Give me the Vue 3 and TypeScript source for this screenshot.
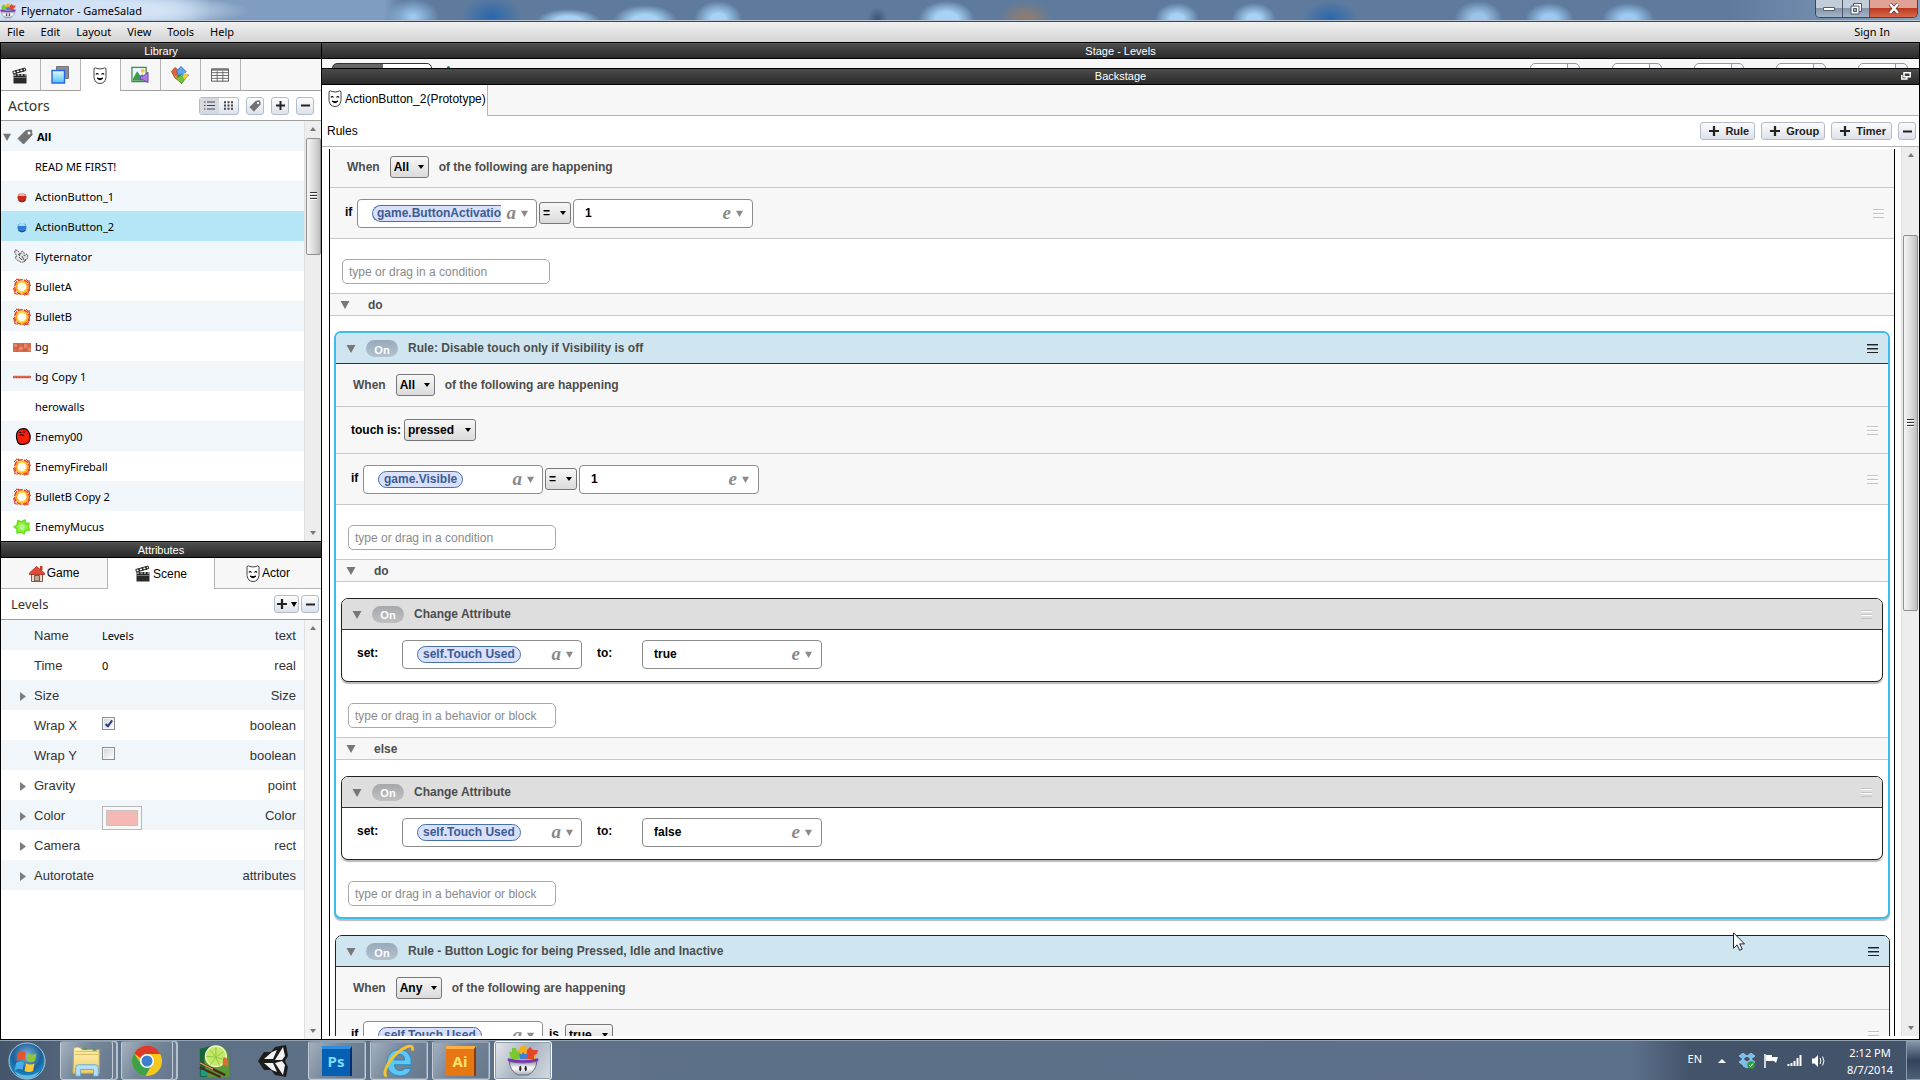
<script setup lang="ts">
import { ref } from 'vue'

interface Actor {
  name: string
  icon?: string
}

interface Attribute {
  name: string
  type: string
  value?: string
  checked?: boolean
  swatch?: boolean
  expandable?: boolean
}

interface Condition {
  kind: 'compare' | 'touch' | 'state'
  attribute?: string
  operator?: string
  value?: string
}

interface Change {
  attribute: string
  value: string
}

interface Section {
  label: string
  changes: Change[]
}

interface Rule {
  title: string
  mode: string
  selected: boolean
  conditions: Condition[]
  sections: Section[]
}

const menus = ['File', 'Edit', 'Layout', 'View', 'Tools', 'Help']

const libraryTabs = [
  { id: 'clapper', label: 'Scenes' },
  { id: 'layers', label: 'Layers' },
  { id: 'mask', label: 'Actors' },
  { id: 'media', label: 'Media' },
  { id: 'puzzle', label: 'Behaviors' },
  { id: 'table', label: 'Tables' },
]
const libraryTab = ref('mask')

const actors: Actor[] = [
  { name: 'READ ME FIRST!' },
  { name: 'ActionButton_1', icon: 'ball-red' },
  { name: 'ActionButton_2', icon: 'ball-blue' },
  { name: 'Flyternator', icon: 'bug' },
  { name: 'BulletA', icon: 'fire' },
  { name: 'BulletB', icon: 'fire' },
  { name: 'bg', icon: 'bricks' },
  { name: 'bg Copy 1', icon: 'strip' },
  { name: 'herowalls' },
  { name: 'Enemy00', icon: 'enemy' },
  { name: 'EnemyFireball', icon: 'fire' },
  { name: 'BulletB Copy 2', icon: 'fire' },
  { name: 'EnemyMucus', icon: 'mucus' },
]
const selectedActor = ref('ActionButton_2')

const attributeTabs = [
  { id: 'home', label: 'Game' },
  { id: 'clapper', label: 'Scene' },
  { id: 'mask', label: 'Actor' },
]
const attributeTab = ref('clapper')

const attributes: Attribute[] = [
  { name: 'Name', type: 'text', value: 'Levels' },
  { name: 'Time', type: 'real', value: '0' },
  { name: 'Size', type: 'Size', expandable: true },
  { name: 'Wrap X', type: 'boolean', checked: true },
  { name: 'Wrap Y', type: 'boolean', checked: false },
  { name: 'Gravity', type: 'point', expandable: true },
  { name: 'Color', type: 'Color', swatch: true, expandable: true },
  { name: 'Camera', type: 'rect', expandable: true },
  { name: 'Autorotate', type: 'attributes', expandable: true },
]

const addButtons = ['Rule', 'Group', 'Timer']

const rules: Rule[] = [
  {
    title: 'Rule: Disable touch only if Visibility is off',
    mode: 'All',
    selected: true,
    conditions: [
      { kind: 'touch', value: 'pressed' },
      { kind: 'compare', attribute: 'game.Visible', operator: '=', value: '1' },
    ],
    sections: [
      { label: 'do', changes: [{ attribute: 'self.Touch Used', value: 'true' }] },
      { label: 'else', changes: [{ attribute: 'self.Touch Used', value: 'false' }] },
    ],
  },
  {
    title: 'Rule - Button Logic for being Pressed, Idle and Inactive',
    mode: 'Any',
    selected: false,
    conditions: [{ kind: 'state', attribute: 'self.Touch Used', value: 'true' }],
    sections: [],
  },
]
</script>

<template>
  <div class="desktop">
    <svg class="defs" aria-hidden="true">
      <defs>
        <linearGradient id="sky" x1="0" y1="0" x2="0" y2="1">
          <stop offset="0" stop-color="#e4fbff" /><stop offset="1" stop-color="#4fc3f5" />
        </linearGradient>
        <radialGradient id="orb" cx=".5" cy=".35" r=".65">
          <stop offset="0" stop-color="#7fb6dc" /><stop offset=".6" stop-color="#1d5f97" /><stop offset=".85" stop-color="#1b84c4" /><stop offset="1" stop-color="#0c2f52" />
        </radialGradient>
        <linearGradient id="folder" x1="0" y1="0" x2="0" y2="1">
          <stop offset="0" stop-color="#fff3b8" /><stop offset="1" stop-color="#efcf69" />
        </linearGradient>
        <linearGradient id="bowl" x1="0" y1="0" x2="0" y2="1">
          <stop offset="0" stop-color="#8b8ba8" /><stop offset=".5" stop-color="#fff" /><stop offset="1" stop-color="#a9a9bd" />
        </linearGradient>
      </defs>

      <symbol id="clapper" viewBox="0 0 16 17">
        <path d="M1.500 7h13v9.500h-13z" fill="#2a2a2a" />
        <path d="M2 8h12.500" stroke="#fff" stroke-dasharray="2 1.500" />
        <path d="M2 10.500h12" stroke="#777" />
        <path d="M.8 4.500 13 1l.8 2.500L1.500 7z" fill="#fff" stroke="#222" />
        <path d="m3.500 3.800 1.500 2.400M7 2.800l1.500 2.400M10.500 2l1.500 2.200" stroke="#222" stroke-width="1.600" />
      </symbol>
      <symbol id="layers" viewBox="0 0 18 18">
        <path d="M5.500.5h12v12h-12z" fill="#8a8d95" stroke="#777" />
        <path d="M1 4.500h12.500V17H1z" fill="url(#sky)" stroke="#2a66e8" stroke-width="1.400" />
      </symbol>
      <symbol id="mask" viewBox="0 0 14 17">
        <path d="M1 1.500Q2.500.300 4 1.500q3 1 6 0 1.500-1.200 3 0v9q-1 6-6 6t-6-6z" fill="#fff" stroke="#444" />
        <path d="M3 7.500q1-2 2.500 0M8.500 7.500q1.500-2 2.500 0" fill="none" stroke="#000" stroke-width="1.200" />
        <path d="M4 11q3 3.500 6 0-3 1.500-6 0z" stroke="#000" />
      </symbol>
      <symbol id="media" viewBox="0 0 19 18">
        <path d="M1 1h15v15H1z" fill="#e8f6ff" stroke="#3f8a45" stroke-width="1.300" />
        <path d="M2 13 6.500 5 10 10l2-2 3 5v2H2z" fill="#3f9a4a" />
        <circle cx="12.500" cy="4.500" r="2" fill="#ffc629" />
        <path d="M10 10h3l5-4v11l-5-3h-3z" fill="#a77be0" stroke="#7347b5" />
      </symbol>
      <symbol id="puzzle" viewBox="0 0 18 18">
        <path d="M.5 5.500 4 1.500l4.500 4L9 9l1.500 8L4 12z" fill="#e0653a" stroke="#a53c1b" stroke-width=".8" />
        <path d="m10 .5 5 5-3 4-2-1.500L7.500 10l-2-5z" fill="#58a9ee" stroke="#2867b5" stroke-width=".8" />
        <path d="m9 9.500 3 1 2.500-2 3 .5-7 8.500-5-5z" fill="#63c83c" stroke="#2f8a20" stroke-width=".8" />
        <path d="m13.500 6.500 4 3-4 4-2-3z" fill="#f7cf3a" />
        <path d="m5 10 5 7-5-5-2-3z" fill="#f09b2d" />
      </symbol>
      <symbol id="table" viewBox="0 0 19 14">
        <path d="M.5.5h18v13H.5z" fill="#fff" stroke="#555" />
        <path d="M1 1.500h17" stroke="#777" stroke-width="2" />
        <path d="M0 4.500h19M0 7.500h19M0 10.500h19M6.500 3v11M12.500 3v11" stroke="#666" />
      </symbol>
      <symbol id="tag" viewBox="0 0 16 16">
        <path d="M9 1.500 14.500 1 15 6 6.500 15 1 9.500z" fill="#727272" stroke="#727272" stroke-linejoin="round" />
        <circle cx="12" cy="4" r="1.500" fill="#fff" />
      </symbol>
      <symbol id="list" viewBox="0 0 11 9">
        <path d="M0 1h1.500M0 4.500h1.500M0 8h1.500M3 1h8M3 4.500h8M3 8h8" stroke="#444" stroke-width="1.200" />
      </symbol>
      <symbol id="grid" viewBox="0 0 9 9">
        <path d="M0 1.200h9M0 4.500h9M0 7.800h9" stroke="#444" stroke-width="2" stroke-dasharray="2 1.500" />
      </symbol>
      <symbol id="plus" viewBox="0 0 9 9"><path d="M4.500 0v9M0 4.500h9" stroke="currentColor" stroke-width="2" /></symbol>
      <symbol id="minus" viewBox="0 0 9 9"><path d="M0 4.500h9" stroke="currentColor" stroke-width="2" /></symbol>
      <symbol id="down" viewBox="0 0 10 10"><path d="M0 1h10L5 10z" fill="currentColor" /></symbol>
      <symbol id="right" viewBox="0 0 6 9"><path d="M0 0v9l6-4.500z" fill="#7d7d7d" /></symbol>
      <symbol id="home" viewBox="0 0 16 17">
        <path d="M2.500 8v8.500h11V8z" fill="#ecdcc8" stroke="#7a5a4a" />
        <path d="M5.500 16V10.500h5V16z" fill="#b9a89a" stroke="#7a5a4a" />
        <path d="M11 1h2.500v4H11z" fill="#c13a2c" />
        <path d="M.5 8 7.500 1.500 15.500 8v1.500H.5z" fill="#dc4a38" stroke="#a5281b" stroke-width=".8" />
      </symbol>

      <symbol id="ball-red" viewBox="0 0 18 18">
        <circle cx="9" cy="9.500" r="4.500" fill="#c8281c" /><path d="M5 8q4-7 8 0z" fill="#f3b5ac" /><path d="M5.500 12.500q3.500 3 7 0" stroke="#5e1d18" fill="none" />
      </symbol>
      <symbol id="ball-blue" viewBox="0 0 18 18">
        <circle cx="9" cy="9.500" r="4.500" fill="#2b7fd6" /><path d="M5 8q4-7 8 0z" fill="#b4dcfa" /><path d="M5.500 12.500q3.500 3 7 0" stroke="#173e74" fill="none" />
      </symbol>
      <symbol id="bug" viewBox="0 0 18 18">
        <path d="M2 2q4 0 5 5l2-4q3 1 2 5l3-2q2 3-1 6-4 4-7 1-3-1-4-4l2-1q-3-3-2-6z" fill="#e3e3e3" stroke="#555" stroke-dasharray="2 .8" />
        <path d="m6 9 3 3M9 8l2 4M5 6l2 2M11 14l2-3" stroke="#555" />
      </symbol>
      <symbol id="fire" viewBox="0 0 18 18">
        <circle cx="9" cy="9" r="7.300" fill="none" stroke="#e8401c" stroke-width="1.600" stroke-dasharray="5 1" />
        <path d="M1 4q2-3 5-3M3 1l3 1M13 1l3 3 1.500 4M16 2l.5 4M.5 10l1 4 3 3M1 15l2 1M17 11l-2 4-4 2.500M16 16l-3 .5" stroke="#e8401c" fill="none" />
        <circle cx="9" cy="9" r="5.600" fill="#fffdf0" stroke="#ffa51f" stroke-width="2" />
        <path d="M5 5q4-3 8 1M4.500 11.500q4 5 8.500 0" stroke="#ffdc3c" stroke-width="1.500" fill="none" />
      </symbol>
      <symbol id="bricks" viewBox="0 0 18 18">
        <path d="M0 5h18v9H0z" fill="#dd6a4a" />
        <path d="M1 6h3v3H1zM6 9h4v3H6zM11 6h3v4h-3zM15 10h3v3h-3z" fill="#e08a6c" />
        <path d="M0 10h5M5 5v5M10 5v4M9 12h6M4 12v2" stroke="#c4563c" />
      </symbol>
      <symbol id="strip" viewBox="0 0 18 18">
        <path d="M0 9h18" stroke="#d9684c" stroke-width="2.500" /><path d="M0 9.500h18" stroke="#b9412b" stroke-dasharray="1 2" />
      </symbol>
      <symbol id="enemy" viewBox="0 0 18 18">
        <path d="M8 1q7-2 9 6 1 8-5 9-7 2-8-4Q2 3 8 1z" fill="#f3200f" stroke="#000" stroke-width="1.200" />
        <path d="M16 6q2 9-6 10 7 2 7-5z" fill="#9c120a" />
        <path d="M6 4.500h2.500M10 4h2M6 7.500q3-1.500 5 0" stroke="#000" fill="none" />
      </symbol>
      <symbol id="mucus" viewBox="0 0 18 18">
        <path d="M5 2.500 8 4l4-2 1 4 3-1-.5 4 1 3-4 .500-1.500 3.500L8 14l-4 1v-4L1 9l3-2z" fill="#8bf23c" stroke="#6be01a" stroke-linejoin="round" stroke-width="1.500" />
        <path d="m6 7 3-1 3 2-1 4-4-.5z" fill="#bdf59a" />
      </symbol>

      <symbol id="salad" viewBox="0 0 32 32">
        <path d="M6 10 8 6l4-1 2-4h5l1 4 4-2 2 4 3 1-1 6H6z" fill="#f2b01e" />
        <path d="M2 7h3V3h4l1 4h3l-1 7H4z" fill="#7cc832" />
        <path d="M20 5l3-3 3 3h5l-1 4-3 1v4h-8z" fill="#e3462c" />
        <path d="M12 9h3l1-2 2 2h3l-2 5h-6z" fill="#3f7fd8" />
        <path d="M2 16q14 4 28 0-1 10-9 14H11Q3 26 2 16z" fill="url(#bowl)" stroke="#555168" stroke-width=".8" />
        <path d="M.8 14.500q15 4 30.400 0" stroke="#7a35b5" stroke-width="2.600" fill="none" />
        <path d="M13.300 21q-1.500 2.500 0 5 1.500-2.500 0-5zM18.700 21q-1.500 2.500 0 5 1.500-2.500 0-5z" fill="#222" stroke="#222" />
      </symbol>
      <symbol id="start" viewBox="0 0 38 38">
        <circle cx="19" cy="19" r="18" fill="url(#orb)" stroke="#a8c8e2" />
        <path d="M10 11q4-2.500 8-.5l-1.500 8q-4-2-8 .5z" fill="#e8552a" />
        <path d="M20 11.500q4 2 8.500 0L27 19q-4 2-8.500 0z" fill="#8cc63e" />
        <path d="M8 21q4-2.500 8-.5l-1.500 7.500q-4-2-8 .5z" fill="#45aee8" />
        <path d="M18 21.500q4 2 8.500 0L25 29q-4 2-8.500 0z" fill="#fcc931" />
        <path d="M6 29q13 9 26 0-5 8-13 8T6 29z" fill="#7fe4ff" opacity=".7" />
      </symbol>
      <symbol id="explorer" viewBox="0 0 34 34">
        <path d="M3 3q4-2 7 0l2 2h18v25H2z" fill="url(#folder)" stroke="#c6a44c" />
        <path d="M5 7h25M4 10h27" stroke="#d9bb62" />
        <path d="M13 4h4M23 5h4" stroke="#4aa04a" stroke-width="2" />
        <path d="M5 33v-9q0-3 3-3h18q3 0 3 3v9h-5v-7H10v7z" fill="#b5e0f7" stroke="#6ba8cf" />
      </symbol>
      <symbol id="chrome" viewBox="0 0 32 32">
        <circle cx="16" cy="16" r="15" fill="#f8c91c" />
        <path d="M3 8.500A15 15 0 0 1 29.500 9H16a7 7 0 0 0-6.500 4z" fill="#db3a2c" />
        <path d="M3 8.500A15 15 0 0 0 14.500 31l6-11-9 .5z" fill="#3ea04a" />
        <circle cx="16" cy="16" r="7" fill="#fff" /><circle cx="16" cy="16" r="5.500" fill="#3c7fd0" />
      </symbol>
      <symbol id="paint" viewBox="0 0 34 36">
        <path d="M2 5 14 2l6 33H2z" fill="#17663a" />
        <path d="M20 1q13 2 13 17v17H10Q0 4 20 1z" fill="#5a9a34" />
        <circle cx="19" cy="13" r="11" fill="#c6e86a" stroke="#eef8c0" stroke-width="1.500" />
        <path d="M19 14V4m0 10 8-6m-8 6 10 3m-10-3 4 9m-4-9-6 8m6-8L9 13m10 1-6-8" stroke="#8cc63e" />
        <path d="M27 14q6 0 5 10l-6-2z" fill="#e06a3a" />
        <path d="m2 20 27 13M2 25l22 10" stroke="#4b2a1c" stroke-width="2.500" /><path d="m2 20 14 7" stroke="#d79a55" stroke-width="1.500" />
        <path d="M3 27q6 0 8 7H3z" fill="#1b9a8a" />
      </symbol>
      <symbol id="unity" viewBox="0 0 30 34">
        <path d="M28 1 30 12 27 17l3 6-2 10-11-2-4-5H6L0 17l6-9h7l4-5z" fill="#1c1c1c" />
        <path d="m17 16 8-13 2 9-3 4zM15 15H6l8-7 5-2zM15 19H6l8 7 5 2zM17 19l8 12 2-10-3-4z" fill="#f2f2f2" />
      </symbol>
      <symbol id="ie" viewBox="0 0 34 36">
        <path d="M30 22H12q1 7 7 6 3 0 4-2h7q-3 8-12 8Q5 33 4 20 5 6 18 6q13 1 12 16zM12 17h11q0-6-5-6-5 0-6 6z" fill="#5cc8f5" stroke="#2279b5" stroke-width=".8" fill-rule="evenodd" />
        <path d="M4 34Q-1 33 6 20 14 8 25 3q8-3 6 4" fill="none" stroke="#f5c52b" stroke-width="3" />
      </symbol>
      <symbol id="dropbox" viewBox="0 0 16 16">
        <path d="m4 0 4 3-4 3-4-3zM12 0l4 3-4 3-4-3zM4 6l4 3-4 3-4-3zM12 6l4 3-4 3-4-3zM8 10l4 3-4 2-4-2z" fill="#6cc0f5" stroke="#d7f0ff" stroke-width=".5" />
        <circle cx="12" cy="12" r="3.800" fill="#2e9e3a" /><path d="m10 12 1.500 1.500L14 10.500" stroke="#fff" fill="none" />
      </symbol>
      <symbol id="flag" viewBox="0 0 16 16">
        <path d="M2 1v14" stroke="#fff" stroke-width="1.500" /><path d="M3 2h6v2h6l-2 6q-2-3-5-2H3z" fill="#fff" />
      </symbol>
      <symbol id="signal" viewBox="0 0 16 16">
        <path d="M1.500 11v2M4.500 10v3M7.500 8v5M10.500 5v8M13.500 2v11" stroke="#fff" stroke-width="2" />
      </symbol>
      <symbol id="speaker" viewBox="0 0 16 16">
        <path d="M1 5.500h2.500L7 2v12l-3.500-3.500H1z" fill="#fff" /><path d="M9 5q2 3 0 6M11.500 3.500q3 4.500 0 9" stroke="#fff" fill="none" />
      </symbol>
    </svg>

    <header class="titlebar">
      <svg class="app-icon"><use href="#salad" /></svg>
      <h1>Flyernator - GameSalad</h1>
      <div class="window-controls">
        <button type="button" aria-label="Minimize"><svg width="12" height="6"><path d="M.5 1.500h11v3H.5z" fill="#fff" stroke="#555e6d" /></svg></button>
        <button type="button" aria-label="Restore"><svg width="12" height="12"><path d="M3.500.5h8v8h-8z" fill="#fff" stroke="#4e5868" /><path d="M1 3h8v8H1z" fill="#fff" stroke="#4e5868" /><path d="M3.500 5.500h3v3h-3z" fill="#9fb0c4" stroke="#4e5868" /></svg></button>
        <button type="button" class="close" aria-label="Close"><svg width="12" height="11"><path d="m2 1 8 9M10 1l-8 9" stroke="#5b3a3a" stroke-width="4" /><path d="m2 1 8 9M10 1l-8 9" stroke="#fff" stroke-width="2.500" /></svg></button>
      </div>
    </header>

    <nav class="menubar">
      <button v-for="menu in menus" :key="menu" type="button">{{ menu }}</button>
      <a href="#sign-in">Sign In</a>
    </nav>

    <div class="workspace">
      <aside class="sidebar">
        <section class="library">
          <h2 class="panel-title">Library</h2>
          <div class="library-tabs">
            <button
              v-for="tab in libraryTabs"
              :key="tab.id"
              type="button"
              :class="{ active: tab.id === libraryTab }"
              :aria-label="tab.label"
              @click="libraryTab = tab.id"
            >
              <svg :class="{ narrow: tab.id === 'mask' || tab.id === 'clapper', flat: tab.id === 'table' }"><use :href="'#' + tab.id" /></svg>
            </button>
          </div>
          <div class="library-tools">
            <h3>Actors</h3>
            <div class="view-switch">
              <button type="button" class="on" aria-label="List view"><svg width="11" height="9"><use href="#list" /></svg></button>
              <button type="button" aria-label="Grid view"><svg width="9" height="9"><use href="#grid" /></svg></button>
            </div>
            <button type="button" class="tool" aria-label="Edit tags"><svg width="12" height="12"><use href="#tag" /></svg></button>
            <button type="button" class="tool" aria-label="Add actor"><svg width="9" height="9"><use href="#plus" /></svg></button>
            <button type="button" class="tool" aria-label="Remove actor"><svg width="9" height="9"><use href="#minus" /></svg></button>
          </div>
          <div class="scroller">
            <ul class="actors">
              <li class="all"><svg class="tri"><use href="#down" /></svg><svg class="tag"><use href="#tag" /></svg>All</li>
              <li
                v-for="actor in actors"
                :key="actor.name"
                :class="{ selected: actor.name === selectedActor }"
                @click="selectedActor = actor.name"
              >
                <svg class="thumb"><use v-if="actor.icon" :href="'#' + actor.icon" /></svg>{{ actor.name }}
              </li>
            </ul>
            <div class="scrollbar">
              <i class="up"></i>
              <div class="bar library-bar"></div>
              <i class="dn"></i>
            </div>
          </div>
        </section>

        <section class="attributes">
          <h2 class="panel-title">Attributes</h2>
          <div class="attribute-tabs">
            <button
              v-for="tab in attributeTabs"
              :key="tab.id"
              type="button"
              :class="{ active: tab.id === attributeTab }"
              @click="attributeTab = tab.id"
            >
              <svg :class="{ narrow: tab.id === 'mask' }"><use :href="'#' + tab.id" /></svg>{{ tab.label }}
            </button>
          </div>
          <div class="attribute-tools">
            <h3>Levels</h3>
            <button type="button" class="tool wide" aria-label="Add attribute">
              <svg width="10" height="10"><use href="#plus" /></svg><svg width="6" height="5" viewBox="0 0 10 10" preserveAspectRatio="none"><path d="M0 0h10L5 10z" /></svg>
            </button>
            <button type="button" class="tool" aria-label="Remove attribute"><svg width="9" height="9"><use href="#minus" /></svg></button>
          </div>
          <div class="scroller">
            <div class="attribute-list">
              <table>
                <tbody>
                  <tr v-for="attr in attributes" :key="attr.name">
                    <td class="twist"><svg v-if="attr.expandable"><use href="#right" /></svg></td>
                    <th scope="row">{{ attr.name }}</th>
                    <td class="value">
                      <input v-if="attr.checked !== undefined" type="checkbox" :checked="attr.checked" :aria-label="attr.name" />
                      <button v-else-if="attr.swatch" type="button" class="swatch" aria-label="Pick color"><i></i></button>
                      <template v-else>{{ attr.value }}</template>
                    </td>
                    <td class="type">{{ attr.type }}</td>
                  </tr>
                </tbody>
              </table>
            </div>
            <div class="scrollbar plain">
              <i class="up"></i>
              <i class="dn"></i>
            </div>
          </div>
        </section>
      </aside>

      <main class="stage">
        <h2 class="panel-title">Stage - Levels</h2>
        <div class="stage-strip">
          <span class="segment dark"></span>
          <i class="play"></i>
          <span v-for="n in 5" :key="n" class="segment"></span>
        </div>
        <h2 class="panel-title backstage-title">
          Backstage
          <svg width="10" height="8"><path d="M3 .8h6.200v4H3z M.8 3v4h5V5" fill="none" stroke="#fff" stroke-width="1.500" /></svg>
        </h2>
        <div class="backstage-tabs">
          <button type="button" class="active"><svg><use href="#mask" /></svg>ActionButton_2(Prototype)</button>
        </div>
        <div class="rules-tools">
          <h3>Rules</h3>
          <button v-for="label in addButtons" :key="label" type="button" class="tool labelled">
            <svg width="10" height="10"><use href="#plus" /></svg>{{ label }}
          </button>
          <button type="button" class="tool" aria-label="Remove rule"><svg width="9" height="9"><use href="#minus" /></svg></button>
        </div>

        <div class="backstage">
          <div class="canvas">
            <div class="outer">
              <div class="row when">
                <span>When</span>
                <span class="pick all-pick"><select aria-label="Match"><option>All</option><option>Any</option></select><i></i></span>
                <span>of the following are happening</span>
              </div>
              <div class="row cond">
                <b>if</b>
                <div class="field">
                  <span class="expr"><span class="token open">game.ButtonActivatio</span></span>
                  <button type="button" aria-label="Choose attribute"><em>a</em><svg><use href="#down" /></svg></button>
                </div>
                <span class="pick op-pick"><select aria-label="Operator"><option>=</option></select><i></i></span>
                <div class="field">
                  <input type="text" value="1" aria-label="Value" />
                  <button type="button" aria-label="Edit expression"><em>e</em><svg><use href="#down" /></svg></button>
                </div>
                <i class="grip"></i>
              </div>
              <div class="drop"><input type="text" placeholder="type or drag in a condition" aria-label="Condition" /></div>
              <div class="section-head"><svg><use href="#down" /></svg>do</div>

              <article v-for="rule in rules" :key="rule.title" class="block rule" :class="{ selected: rule.selected }">
                <header class="block-head">
                  <svg><use href="#down" /></svg>
                  <button type="button" class="pill">On</button>
                  <h4>{{ rule.title }}</h4>
                  <i class="grip dark"></i>
                </header>
                <div class="row when">
                  <span>When</span>
                  <span class="pick" :class="rule.mode === 'All' ? 'all-pick' : 'any-pick'">
                    <select aria-label="Match"><option>{{ rule.mode }}</option></select><i></i>
                  </span>
                  <span>of the following are happening</span>
                </div>
                <template v-for="(cond, c) in rule.conditions" :key="c">
                  <div v-if="cond.kind === 'touch'" class="row touch">
                    <b>touch is:</b>
                    <span class="pick touch-pick"><select aria-label="Touch state"><option>{{ cond.value }}</option></select><i></i></span>
                    <i class="grip"></i>
                  </div>
                  <div v-else class="row cond">
                    <b>if</b>
                    <div class="field">
                      <span class="expr"><span class="token">{{ cond.attribute }}</span></span>
                      <button type="button" aria-label="Choose attribute"><em>a</em><svg><use href="#down" /></svg></button>
                    </div>
                    <template v-if="cond.kind === 'compare'">
                      <span class="pick op-pick"><select aria-label="Operator"><option>{{ cond.operator }}</option></select><i></i></span>
                      <div class="field">
                        <input type="text" :value="cond.value" aria-label="Value" />
                        <button type="button" aria-label="Edit expression"><em>e</em><svg><use href="#down" /></svg></button>
                      </div>
                    </template>
                    <template v-else>
                      <b class="is">is</b>
                      <span class="pick bool-pick"><select aria-label="State"><option>{{ cond.value }}</option></select><i></i></span>
                    </template>
                    <i class="grip"></i>
                  </div>
                </template>
                <div class="drop"><input type="text" placeholder="type or drag in a condition" aria-label="Condition" /></div>
                <template v-for="section in rule.sections" :key="section.label">
                  <div class="section-head"><svg><use href="#down" /></svg>{{ section.label }}</div>
                  <article v-for="(change, i) in section.changes" :key="i" class="block change">
                    <header class="block-head">
                      <svg><use href="#down" /></svg>
                      <button type="button" class="pill">On</button>
                      <h4>Change Attribute</h4>
                      <i class="grip"></i>
                    </header>
                    <div class="assign">
                      <b>set:</b>
                      <div class="field">
                        <span class="expr"><span class="token">{{ change.attribute }}</span></span>
                        <button type="button" aria-label="Choose attribute"><em>a</em><svg><use href="#down" /></svg></button>
                      </div>
                      <b>to:</b>
                      <div class="field">
                        <input type="text" :value="change.value" aria-label="New value" />
                        <button type="button" aria-label="Edit expression"><em>e</em><svg><use href="#down" /></svg></button>
                      </div>
                    </div>
                  </article>
                  <div class="drop"><input type="text" placeholder="type or drag in a behavior or block" aria-label="Behavior" /></div>
                </template>
              </article>
            </div>
          </div>
          <div class="scrollbar broad">
            <i class="up"></i>
            <div class="bar stage-bar"></div>
            <i class="dn"></i>
          </div>
        </div>
      </main>
    </div>

    <svg class="cursor" viewBox="0 0 12 19"><path d="M.5.8v15.500l3.600-3.400 2.500 5.400 2.600-1.200-2.500-5.200h4.800z" fill="#fff" stroke="#1c2433" /></svg>

    <footer class="taskbar">
      <button type="button" class="start" aria-label="Start"><svg><use href="#start" /></svg></button>
      <button type="button" class="task stacked" aria-label="Explorer"><svg><use href="#explorer" /></svg></button>
      <button type="button" class="task stacked double" aria-label="Chrome"><svg><use href="#chrome" /></svg></button>
      <button type="button" class="launcher" aria-label="Paint tool"><svg><use href="#paint" /></svg></button>
      <button type="button" class="launcher" aria-label="Unity"><svg><use href="#unity" /></svg></button>
      <button type="button" class="task"><span class="adobe ps">Ps</span></button>
      <button type="button" class="task" aria-label="Internet Explorer"><svg><use href="#ie" /></svg></button>
      <button type="button" class="task"><span class="adobe ai">Ai</span></button>
      <button type="button" class="task current" aria-label="GameSalad"><svg><use href="#salad" /></svg></button>
      <div class="tray">
        <span class="lang">EN</span>
        <i class="more"></i>
        <svg><use href="#dropbox" /></svg>
        <svg><use href="#flag" /></svg>
        <svg><use href="#signal" /></svg>
        <svg><use href="#speaker" /></svg>
        <time>2:12 PM<br />8/7/2014</time>
        <button type="button" class="peek" aria-label="Show desktop"></button>
      </div>
    </footer>
  </div>
</template>

<style>
body {
  margin: 0;
  background: #fff;
}
</style>

<style scoped>
.desktop {
  position: relative;
  display: flex;
  flex-direction: column;
  height: 100vh;
  overflow: hidden;
  font: 12px/16px 'Liberation Sans', Arial, sans-serif;
  color: #000;
}
.desktop *,
.desktop *::before,
.desktop *::after {
  box-sizing: border-box;
}
.defs {
  position: absolute;
  width: 0;
  height: 0;
}
h1, h2, h3, h4 {
  margin: 0;
  font: inherit;
}
button {
  padding: 0;
  border: 0;
  background: none;
  font: inherit;
  color: inherit;
}
svg {
  flex: none;
  display: block;
}

/* Title bar */
.titlebar {
  flex: none;
  display: flex;
  align-items: center;
  height: 22px;
  border-bottom: 1px solid #33475f;
  box-shadow: inset 0 -1px #b9c6d6;
  font: 11px/16px 'Noto Sans', sans-serif;
  background:
    radial-gradient(ellipse 9% 90% at 4% 50%, #d3e3f5 50%, transparent) no-repeat,
    radial-gradient(ellipse 26px 18px at 21.500% 80%, #9cc8f0 10%, transparent),
    radial-gradient(ellipse 30px 20px at 25.600% 80%, #2f69ac 10%, transparent),
    radial-gradient(ellipse 32px 12px at 29.600% 100%, #a5d2f5 40%, transparent),
    radial-gradient(ellipse 32px 16px at 33.600% 100%, #a5d2f5 40%, transparent),
    radial-gradient(ellipse 24px 18px at 37.400% 90%, #a5d2f5 30%, transparent),
    radial-gradient(ellipse 10px 12px at 45.700% 90%, #3c5878, transparent),
    radial-gradient(ellipse 28px 18px at 49.300% 90%, #a5d2f5 40%, transparent),
    radial-gradient(ellipse 28px 18px at 53.400% 90%, #8d7b72 20%, transparent),
    radial-gradient(ellipse 22px 16px at 61.300% 90%, #a5d2f5 30%, transparent),
    radial-gradient(ellipse 22px 16px at 65.300% 90%, #a5d2f5 30%, transparent),
    radial-gradient(ellipse 28px 18px at 69.300% 90%, #2f69ac 10%, transparent),
    radial-gradient(ellipse 24px 18px at 77% 90%, #9cc4e8 30%, transparent),
    radial-gradient(ellipse 24px 16px at 80.700% 90%, #9ccaf2 30%, transparent),
    radial-gradient(ellipse 26px 16px at 84.800% 90%, #9ccaf2 30%, transparent),
    linear-gradient(90deg, #a9c5e3 0, #a9c5e3 9%, #7f9dc0 11%, #7f9dc0 20%, #5e7b9e 21%, #5e7b9e 90%, #86a0be 100%);
}
.app-icon {
  width: 16px;
  height: 16px;
}
.titlebar h1 {
  margin-left: 5px;
}
.window-controls {
  display: flex;
  align-self: flex-start;
  margin: 0 2px 0 auto;
  height: 18px;
  border: 1px solid #3c4757;
  border-top: 0;
  border-radius: 0 0 5px 5px;
  overflow: hidden;
}
.window-controls button {
  display: flex;
  align-items: center;
  justify-content: center;
  width: 27px;
  border-right: 1px solid #4c586a;
  background: linear-gradient(#c3cdd9 45%, #8696ab 50%, #a6b6c9);
}
.window-controls .close {
  width: 47px;
  border: 0;
  background: linear-gradient(#e0a294 45%, #bd3a20 50%, #d8674a);
}

/* Menu bar */
.menubar {
  flex: none;
  display: flex;
  align-items: center;
  gap: 16px;
  height: 20px;
  padding: 0 30px 0 7px;
  background: linear-gradient(#f0f0f0, #d4d4d4);
  font: 11px/16px 'Noto Sans', sans-serif;
}
.menubar a {
  margin-left: auto;
  color: #000;
  text-decoration: none;
}

.workspace {
  flex: 1;
  display: flex;
  min-height: 0;
  border: 1px solid #000;
}
.panel-title {
  flex: none;
  height: 16px;
  border-top: 1px solid #5a5a5a;
  border-bottom: 1px solid #000;
  background: linear-gradient(#4c4c4c, #2a2a2a);
  color: #fff;
  font-size: 11px;
  line-height: 14px;
  text-align: center;
}
.sidebar {
  flex: none;
  display: flex;
  flex-direction: column;
  width: 321px;
  border-right: 1px solid #000;
}
.library {
  flex: none;
  display: flex;
  flex-direction: column;
  border-bottom: 1px solid #000;
}
.library-tabs {
  display: flex;
  height: 32px;
  background: #f7f7f7;
  box-shadow: inset 0 -1px #a0a0a0;
}
.library-tabs button {
  display: flex;
  align-items: center;
  justify-content: center;
  width: 40px;
  padding-right: 2px;
  border-right: 1px solid #b4b4b4;
}
.library-tabs .active {
  background: #fff;
}
.library-tabs svg {
  width: 18px;
  height: 18px;
}
.library-tabs .narrow {
  width: 16px;
  height: 17px;
}
.library-tabs .flat {
  height: 14px;
}
.library-tools {
  display: flex;
  align-items: center;
  gap: 7px;
  height: 30px;
  padding: 0 7px;
  border-bottom: 1px solid #a0a0a0;
}
.library-tools h3 {
  margin-right: auto;
  font: 14px/20px 'Noto Sans', sans-serif;
  color: #333;
}
.tool,
.view-switch {
  display: flex;
  align-items: center;
  justify-content: center;
  width: 18px;
  height: 18px;
  border: 1px solid #b3bccb;
  border-radius: 3px;
  background: linear-gradient(#fcfcfd, #dde1ea);
  color: #222;
}
.view-switch {
  width: 40px;
  overflow: hidden;
}
.view-switch button {
  flex: 1;
  display: flex;
  align-items: center;
  justify-content: center;
  height: 16px;
}
.view-switch .on {
  background: #d5d9e2;
}
.scroller {
  display: flex;
  min-height: 0;
}
.actors {
  flex: 1;
  margin: 0;
  padding: 0;
  list-style: none;
  font: 11px/16px 'Noto Sans', sans-serif;
}
.actors li {
  display: flex;
  align-items: center;
  height: 30px;
  padding: 1px 0 0 12px;
}
.actors li:nth-child(odd) {
  background: #f1f6fb;
}
.actors .selected {
  background: #b5e6f5;
}
.actors .all {
  padding-left: 2px;
  font-weight: bold;
}
.thumb {
  width: 18px;
  height: 18px;
  margin-right: 4px;
}
.tri {
  width: 8px;
  height: 8px;
  margin-right: 6px;
  color: #777;
}
.tag {
  width: 16px;
  height: 16px;
  margin-right: 4px;
}

/* Scroll bars */
.scrollbar {
  flex: none;
  display: flex;
  flex-direction: column;
  align-items: center;
  width: 17px;
  padding: 6px 0;
  background: #ededed;
  border-left: 1px solid #e0e0e0;
}
.scrollbar.broad {
  width: 18px;
}
.scrollbar.plain {
  background: #f4f4f4;
}
.up,
.dn {
  width: 0;
  height: 0;
  border: 3px solid transparent;
  border-top: 0;
  border-bottom: 4px solid #777;
}
.dn {
  margin-top: auto;
  border-top: 4px solid #777;
  border-bottom: 0;
}
.bar {
  display: flex;
  align-items: center;
  justify-content: center;
  width: 15px;
  margin-top: 7px;
  border: 1px solid #8f8f8f;
  border-radius: 2px;
  background: linear-gradient(90deg, #f5f5f5, #d8d8d8 60%, #bdbdbd);
}
.bar::after {
  content: '';
  width: 7px;
  height: 9px;
  background: repeating-linear-gradient(#333 0 1px, #fff 1px 2px, transparent 2px 3px);
}
.library-bar {
  height: 117px;
}
.stage-bar {
  height: 376px;
  margin-top: 78px;
}

/* Attributes */
.attributes {
  flex: 1;
  display: flex;
  flex-direction: column;
  min-height: 0;
}
.attribute-tabs {
  flex: none;
  display: flex;
  height: 31px;
}
.attribute-tabs button {
  flex: 1;
  display: flex;
  align-items: center;
  justify-content: center;
  gap: 2px;
  background: #f7f7f7;
  border-bottom: 1px solid #b4b4b4;
}
.attribute-tabs .active {
  background: #fff;
  border: solid #b4b4b4;
  border-width: 0 1px;
}
.attribute-tabs svg {
  width: 16px;
  height: 17px;
}
.attribute-tabs .narrow {
  width: 14px;
}
.attribute-tools {
  flex: none;
  display: flex;
  align-items: center;
  gap: 2px;
  height: 31px;
  padding: 0 2px 0 10px;
  border-bottom: 1px solid #a0a0a0;
}
.attribute-tools h3 {
  margin-right: auto;
  font: 13px/20px 'Noto Sans', sans-serif;
  color: #333;
}
.tool.wide {
  width: 25px;
  gap: 4px;
}
.attributes .scroller {
  flex: 1;
}
.attribute-list {
  flex: 1;
}
table {
  width: 100%;
  border-collapse: collapse;
  table-layout: fixed;
}
td,
th {
  height: 30px;
  padding: 2px 0 0;
  font: 13px/16px 'Liberation Sans', Arial, sans-serif;
  text-align: left;
  color: #333;
}
tr:nth-child(odd) {
  background: #f1f6fb;
}
.twist {
  width: 33px;
}
.twist svg {
  width: 6px;
  height: 9px;
  margin-left: 19px;
}
th {
  width: 68px;
}
.value {
  font: 11px/16px 'Noto Sans', sans-serif;
  color: #000;
}
.type {
  width: 90px;
  padding-right: 8px;
  text-align: right;
}
input[type='checkbox'] {
  appearance: none;
  display: grid;
  place-items: center;
  width: 13px;
  height: 13px;
  margin: 0 0 6px;
  border: 1px solid #8e8f8f;
  background: linear-gradient(135deg, #d0d4da, #fff);
  outline: 1px solid #f4f4f4;
  outline-offset: -2px;
}
input[type='checkbox']:checked::after {
  content: '';
  width: 4px;
  height: 8px;
  border: solid #243a8a;
  border-width: 0 2px 2px 0;
  transform: rotate(38deg);
}
.swatch {
  display: block;
  width: 40px;
  height: 24px;
  margin-top: 4px;
  padding: 3px;
  border: 1px solid #b8b8b8;
  background: #f8f8f8;
}
.swatch i {
  display: block;
  height: 16px;
  border: 1px solid #c4c4c4;
  background: #f5b8b3;
}

/* Stage */
.stage {
  flex: 1;
  display: flex;
  flex-direction: column;
  min-width: 0;
}
.stage-strip {
  flex: none;
  display: flex;
  gap: 32px;
  height: 9px;
  padding: 4px 11px 0 10px;
  overflow: hidden;
  background: #f7f7f7;
}
.segment {
  width: 50px;
  height: 20px;
  border: 1px solid #999;
  border-radius: 5px;
  background: linear-gradient(90deg, #fff 36px, #999 36px 37px, #f2f5fa 37px);
}
.segment.dark {
  width: 100px;
  border-color: #333;
  background: linear-gradient(90deg, #666 50px, #fff 50px);
}
.play {
  width: 3px;
  height: 3px;
  margin: 3px auto 0 -17px;
  border-radius: 50%;
  background: #2b7a5a;
}
.backstage-title {
  display: grid;
  grid-template-columns: 1fr auto 1fr;
  align-items: center;
  height: 17px;
  padding-bottom: 2px;
  border-top: 1px solid #000;
}
.backstage-title::before {
  content: '';
}
.backstage-title svg {
  justify-self: end;
  margin-right: 8px;
}
.backstage-tabs {
  flex: none;
  display: flex;
  height: 31px;
  background: #f7f7f7;
  box-shadow: inset 0 -1px #b4b4b4;
}
.backstage-tabs button {
  display: flex;
  align-items: center;
  gap: 3px;
  padding: 0 1px 4px 6px;
  border-right: 1px solid #b4b4b4;
  background: #fff;
}
.backstage-tabs svg {
  width: 14px;
  height: 17px;
}
.rules-tools {
  flex: none;
  display: flex;
  align-items: center;
  gap: 6px;
  height: 31px;
  padding: 0 3px 0 5px;
  border-bottom: 1px solid #b4b4b4;
}
.rules-tools h3 {
  margin-right: auto;
}
.tool.labelled {
  width: auto;
  gap: 6px;
  padding: 0 5px 0 8px;
  font-size: 11px;
  font-weight: bold;
}
.backstage {
  flex: 1;
  display: flex;
  min-height: 0;
  margin-bottom: 3px;
  overflow: hidden;
}
.canvas {
  flex: 1;
  min-width: 0;
  padding: 2px 6px 0 7px;
}
.outer {
  height: 100%;
  border: solid #000;
  border-width: 0 1px;
}
.row {
  display: flex;
  align-items: center;
  border-bottom: 1px solid #c8c8c8;
  background: #f7f7f7;
  font-weight: bold;
  color: #4d4d4d;
}
.row b,
.assign b {
  color: #000;
}
.when {
  gap: 10px;
  height: 43px;
  padding-left: 17px;
}
.outer > .when {
  height: 39px;
  padding-bottom: 3px;
}
.touch {
  gap: 3px;
  height: 47px;
  padding-left: 15px;
}
.cond {
  gap: 2px;
  height: 51px;
  padding: 0 0 0 15px;
}
.cond > b {
  width: 10px;
  margin-bottom: 3px;
}
.cond > .is {
  width: 18px;
  padding-left: 4px;
}
.grip {
  flex: none;
  width: 11px;
  height: 9px;
  margin: 0 10px 0 auto;
  background: repeating-linear-gradient(#c4c4c4 0 1px, #fff 1px 2px, transparent 2px 4px);
}
.grip.dark {
  background: repeating-linear-gradient(#222 0 1px, #7c8f99 1px 2px, transparent 2px 4px);
}
.pick {
  display: grid;
  align-items: center;
}
.pick select,
.pick i {
  grid-area: 1 / 1;
}
.pick select {
  appearance: none;
  width: 100%;
  height: 22px;
  padding: 0 3px;
  border: 1px solid #777;
  border-radius: 3px;
  background: linear-gradient(#f7f7f7, #dadada);
  font: bold 12px/16px 'Liberation Sans', Arial, sans-serif;
  color: #000;
}
.pick i {
  justify-self: end;
  margin-right: 5px;
  border: 3px solid transparent;
  border-top: 4px solid #000;
  border-bottom: 0;
  pointer-events: none;
}
.all-pick { width: 39px; }
.any-pick { width: 46px; }
.touch-pick { width: 72px; }
.op-pick { width: 32px; }
.bool-pick { width: 48px; }
.field {
  flex: none;
  display: flex;
  align-items: center;
  width: 180px;
  height: 29px;
  border: 1px solid #8c8c8c;
  border-radius: 4px;
  background: #fff;
}
.expr {
  display: flex;
  width: 131px;
  margin-left: 14px;
}
.token {
  flex: none;
  padding: 0 5px;
  border: 1px solid #4a70a8;
  border-radius: 9px;
  background: #d9e0fb;
  line-height: 15px;
  font-weight: bold;
  color: #3c5c92;
}
.token.open {
  padding: 0 0 0 4px;
  border-right: 0;
  border-radius: 9px 0 0 9px;
}
.field input {
  width: 130px;
  margin-left: 11px;
  padding: 0;
  border: 0;
  outline: 0;
  background: none;
  font: bold 12px/16px 'Liberation Sans', Arial, sans-serif;
  color: #000;
}
.field button {
  display: flex;
  align-items: center;
  gap: 5px;
  margin: 0 8px 0 auto;
  color: #8a8a8a;
}
.field input + button {
  margin-right: 9px;
}
.field em {
  font: italic bold 19px/20px 'Liberation Serif', serif;
}
.field button svg {
  width: 7px;
  height: 7px;
}
.drop {
  padding: 20px 12px 9px;
}
.drop input {
  display: block;
  width: 208px;
  height: 25px;
  padding: 0 6px;
  border: 1px solid #a8a8a8;
  border-radius: 5px;
  background: #fff;
  font: 12px/16px 'Liberation Sans', Arial, sans-serif;
}
.drop input::placeholder {
  color: #8a8a8a;
  opacity: 1;
}
.section-head {
  display: flex;
  align-items: center;
  gap: 18px;
  height: 23px;
  padding-left: 10px;
  border: solid #c8c8c8;
  border-width: 1px 0;
  background: #f7f7f7;
  font-weight: bold;
  color: #4d4d4d;
}
.section-head svg,
.block-head > svg {
  width: 10px;
  height: 9px;
  color: #777;
}
.block {
  border: 1px solid #222;
  border-radius: 7px;
  overflow: hidden;
  background: #fff;
  box-shadow: 0 2px 1px #bbb;
}
.block-head {
  display: flex;
  align-items: center;
  height: 31px;
  padding-left: 10px;
  border-bottom: 1px solid #333;
  background: #dedede;
  color: #4d4d4d;
}
.block-head h4 {
  font-weight: bold;
}
.pill {
  width: 32px;
  height: 17px;
  margin: 0 10px;
  border-radius: 9px;
  background: linear-gradient(#a4a9ae, #c0c0c0);
  color: #fff;
  font-size: 11px;
  font-weight: bold;
  line-height: 18px;
}
.rule {
  margin: 16px 4px 0 5px;
}
.rule.selected {
  margin: 15px 4px 0;
  border: 2px solid #3dbdec;
  padding-bottom: 2px;
}
.rule > .block-head {
  background: #cfe6f0;
}
.rule > .block-head .pill {
  background: linear-gradient(#98a9bb, #b4c3cf);
  line-height: 20px;
}
.change {
  margin: 16px 5px 0;
}
.change + .drop {
  padding-top: 21px;
}
.assign {
  display: flex;
  align-items: center;
  height: 51px;
  padding: 0 15px 3px;
}
.assign b {
  width: 45px;
  margin-bottom: 2px;
}
.assign .field + b {
  width: 60px;
  padding-left: 15px;
}

.cursor {
  position: absolute;
  right: 175px;
  bottom: 129px;
  width: 12px;
  height: 19px;
}

/* Taskbar */
.taskbar {
  flex: none;
  display: flex;
  height: 40px;
  border-top: 1px solid #93a2b3;
  background: linear-gradient(90deg, #45566c 0, #5e7186 6%, #5b7089 80%, #5b7089 85%, #43536a 88%, #43536a 100%);
}
.start {
  width: 55px;
  padding-left: 8px;
}
.start svg {
  width: 38px;
  height: 38px;
}
.task,
.launcher {
  display: flex;
  align-items: center;
  justify-content: center;
  width: 58px;
  margin-right: 4px;
}
.task {
  border: 1px solid #c3ccd6;
  border-top-color: #8c9aab;
  border-radius: 3px;
  background: linear-gradient(120deg, #a5b2c0, #76879a 45%, #65778c);
  box-shadow: inset 0 0 0 1px #8d9caf;
}
.task.stacked {
  width: 53px;
  margin: 0 8px 0 5px;
  box-shadow: 4px 0 0 -1px #697c93, 5px 0 #b4c0cd;
}
.task.double {
  width: 52px;
  margin: 0 17px 0 0;
}
.task.current {
  border-color: #fff;
  background: linear-gradient(120deg, #e4e8ec, #a8b3c0 50%, #d5dbe1);
}
.task svg,
.launcher svg {
  width: 32px;
  height: 34px;
}
.launcher {
  width: 48px;
  margin-right: 11px;
}
.adobe {
  width: 30px;
  height: 30px;
  border-top: 3px solid #2f8fdd;
  border-right: 2px solid #012f6b;
  background: #0560b4;
  color: #7fdcff;
  font: bold 15px/24px 'Noto Sans', sans-serif;
}
.adobe.ai {
  border-top-color: #ffae42;
  border-right-color: #8a3a08;
  background: #e67712;
  color: #ffe36a;
}
.tray {
  display: flex;
  align-items: center;
  gap: 8px;
  margin-left: auto;
  color: #fff;
  font: 11px/17px 'Noto Sans', sans-serif;
}
.tray svg {
  width: 16px;
  height: 16px;
}
.lang {
  margin: 0 8px 4px 0;
}
.more {
  margin-right: 5px;
  border: 4px solid transparent;
  border-top: 0;
  border-bottom: 4px solid #fff;
}
.tray time {
  margin: 0 5px 0 12px;
  text-align: center;
}
.peek {
  align-self: stretch;
  width: 14px;
  border: 1px solid #8b9aad;
  border-right: 0;
  background: linear-gradient(#8393a8, #34425a 50%, #4e6079);
}
</style>
